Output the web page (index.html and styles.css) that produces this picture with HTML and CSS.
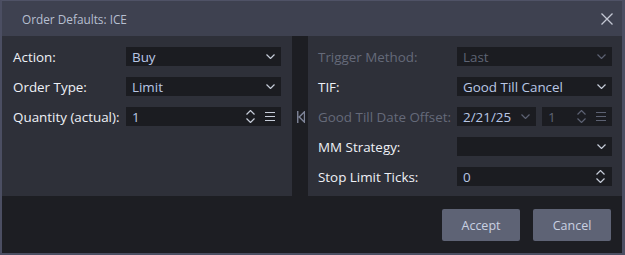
FILE: index.html
```html
<!DOCTYPE html>
<html lang="en">
<head>
  <meta charset="UTF-8">
  <title>Order Defaults: ICE</title>
  <link rel="stylesheet" href="styles.css">
</head>
<body>
  <div class="dialog">
    <div class="titlebar">
      <span class="title">Order Defaults: ICE</span>
      <svg class="close" width="12" height="12" viewBox="0 0 12 12"><path d="M0.5 0.5 L11.5 11.5 M11.5 0.5 L0.5 11.5" stroke="#c3c7d3" stroke-width="1.3" fill="none"/></svg>
    </div>

    <div class="content">
      <!-- left column -->
      <div class="panel left">
        <div class="row">
          <label>Action:</label>
          <div class="field"><span class="value">Buy</span><svg class="chev" width="9" height="5" viewBox="0 0 9 5"><path d="M0.5 0.5 L4.5 4.5 L8.5 0.5" /></svg></div>
        </div>
        <div class="row">
          <label>Order Type:</label>
          <div class="field"><span class="value">Limit</span><svg class="chev" width="9" height="5" viewBox="0 0 9 5"><path d="M0.5 0.5 L4.5 4.5 L8.5 0.5" /></svg></div>
        </div>
        <div class="row">
          <label>Quantity (actual):</label>
          <div class="field"><span class="value">1</span>
            <svg class="spin" width="9" height="13" viewBox="0 0 9 13"><path d="M0.5 4.5 L4.5 0.5 L8.5 4.5 M0.5 8.5 L4.5 12.5 L8.5 8.5" /></svg>
            <svg class="menu" width="10" height="9" viewBox="0 0 10 9"><path d="M0 0.5 H10 M0 4.5 H10 M0 8.5 H10" /></svg>
          </div>
        </div>
      </div>

      <div class="gutter">
        <svg width="8" height="12" viewBox="0 0 8 12"><path d="M0.75 0 V12 M7.5 0.8 L2.2 6 L7.5 11.2 Z" stroke="#7f8599" stroke-width="1.4" fill="none"/></svg>
      </div>

      <!-- right column -->
      <div class="panel right">
        <div class="row">
          <label class="off">Trigger Method:</label>
          <div class="field off"><span class="value">Last</span><svg class="chev" width="9" height="5" viewBox="0 0 9 5"><path d="M0.5 0.5 L4.5 4.5 L8.5 0.5" /></svg></div>
        </div>
        <div class="row">
          <label>TIF:</label>
          <div class="field"><span class="value">Good Till Cancel</span><svg class="chev" width="9" height="5" viewBox="0 0 9 5"><path d="M0.5 0.5 L4.5 4.5 L8.5 0.5" /></svg></div>
        </div>
        <div class="row">
          <label class="off">Good Till Date Offset:</label>
          <div class="pair">
            <div class="field date"><span class="value">2/21/25</span><svg class="chev dim" width="9" height="5" viewBox="0 0 9 5"><path d="M0.5 0.5 L4.5 4.5 L8.5 0.5" /></svg></div>
            <div class="field num off"><span class="value">1</span>
              <svg class="spin" width="9" height="13" viewBox="0 0 9 13"><path d="M0.5 4.5 L4.5 0.5 L8.5 4.5 M0.5 8.5 L4.5 12.5 L8.5 8.5" /></svg>
              <svg class="menu" width="10" height="9" viewBox="0 0 10 9"><path d="M0 0.5 H10 M0 4.5 H10 M0 8.5 H10" /></svg>
            </div>
          </div>
        </div>
        <div class="row">
          <label>MM Strategy:</label>
          <div class="field"><span class="value"></span><svg class="chev" width="9" height="5" viewBox="0 0 9 5"><path d="M0.5 0.5 L4.5 4.5 L8.5 0.5" /></svg></div>
        </div>
        <div class="row">
          <label>Stop Limit Ticks:</label>
          <div class="field"><span class="value">0</span>
            <svg class="spin" width="9" height="13" viewBox="0 0 9 13"><path d="M0.5 4.5 L4.5 0.5 L8.5 4.5 M0.5 8.5 L4.5 12.5 L8.5 8.5" /></svg>
          </div>
        </div>
      </div>
    </div>

    <div class="footer">
      <button>Accept</button>
      <button>Cancel</button>
    </div>
  </div>
</body>
</html>
```

FILE: styles.css
```css
:root {
  --frame: #4b4e62;
  --titlebar: #3e4150;
  --panel: #2e3039;
  --dark: #1d1e23;
  --input: #1b1c21;
  --label: #eef1f7;
  --value: #b9c7e6;
  --muted: #656a79;
}
body {
  margin: 0;
  background: var(--frame);
  font-family: 'Open Sans', 'Noto Sans', sans-serif;
  font-size: 13.4px;
}
.dialog {
  width: 620px;
  height: 252px;
  border-left: 2px solid var(--frame);
  border-right: 3px solid var(--frame);
  border-top: 1px solid #4f5266;
  border-bottom: 2px solid var(--frame);
  display: flex;
  flex-direction: column;
  background: var(--dark);
}
.titlebar {
  height: 35px;
  background: var(--titlebar);
  display: flex;
  align-items: center;
  padding: 0 9px 0 20px;
}
.title {
  flex: 1;
  color: #b7bfd1;
  font-size: 11.8px;
  padding-top: 1px;
}
.close {
  margin-top: 1px;
}
.content {
  height: 160px;
  display: flex;
}
.panel {
  background: var(--panel);
  display: flex;
  flex-direction: column;
  gap: 11px;
  padding-top: 11px;
}
.left {
  width: 290px;
  padding-left: 11px;
  padding-right: 11px;
  box-sizing: border-box;
}
.left label {
  width: 113px;
}
.right {
  flex: 1;
  padding-left: 10px;
  padding-right: 10px;
}
.right label {
  width: 139px;
}
.gutter {
  width: 16px;
  display: flex;
  justify-content: center;
  padding-top: 75px;
  box-sizing: border-box;
}
.gutter svg {
  margin-left: 1px;
}
.row {
  height: 19px;
  display: flex;
  align-items: center;
}
label {
  color: var(--label);
  flex-shrink: 0;
  padding-top: 1px;
  white-space: nowrap;
}
label.off {
  color: var(--muted);
}
.field {
  flex: 1;
  height: 19px;
  background: var(--input);
  display: flex;
  align-items: center;
  padding: 0 6px;
  box-sizing: border-box;
}
.value {
  flex: 1;
  color: var(--value);
  padding-top: 1px;
}
.field svg path {
  stroke: #c6ccd9;
  stroke-width: 1.2;
  fill: none;
}
.spin {
  margin-right: 1px;
}
.menu {
  margin-left: 9px;
}
.field.off .value {
  color: #5f6474;
}
.field.off svg path,
.chev.dim path {
  stroke: #5c6172;
}
.pair {
  flex: 1;
  display: flex;
  gap: 6px;
}
.date {
  flex: none;
  width: 79px;
}
.num {
  flex: 1;
}
.footer {
  flex: 1;
  display: flex;
  justify-content: flex-end;
  align-items: flex-start;
  gap: 13px;
  padding: 13px 11px 0 0;
}
button {
  width: 78px;
  height: 32px;
  border: none;
  border-radius: 2px;
  background: #5e6375;
  color: #c9d1e2;
  font-family: inherit;
  font-size: 12.5px;
}
```
